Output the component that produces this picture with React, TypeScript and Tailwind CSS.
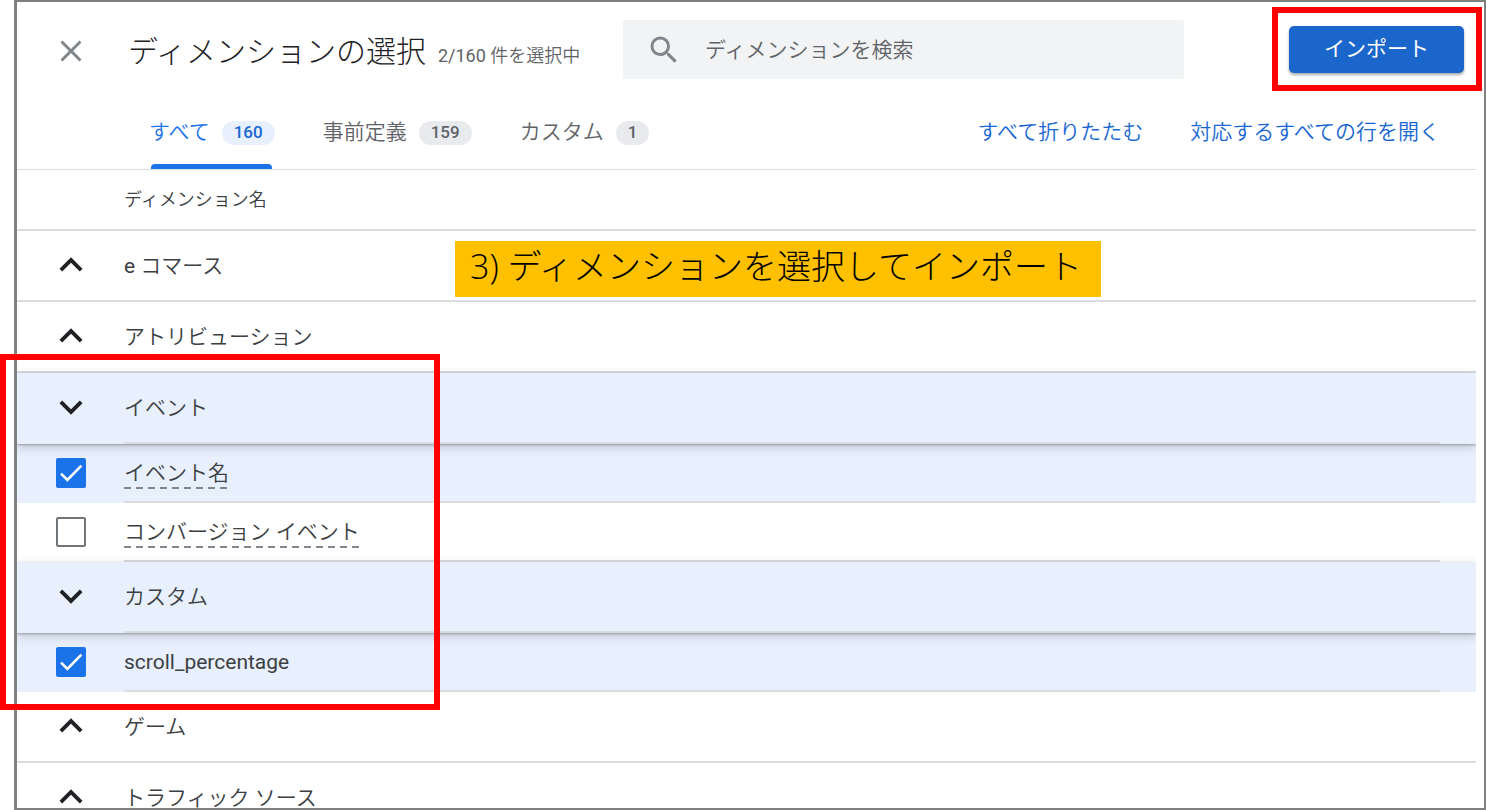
import React, { useState } from "react";
import { MdClose, MdExpandLess, MdExpandMore, MdSearch } from "react-icons/md";

type Row =
  | { kind: "group"; name: string; open?: boolean }
  | { kind: "item"; name: string; checked: boolean; hint?: boolean };

const ROWS: Row[] = [
  { kind: "group", name: "e コマース" },
  { kind: "group", name: "アトリビューション" },
  { kind: "group", name: "イベント", open: true },
  { kind: "item", name: "イベント名", checked: true, hint: true },
  { kind: "item", name: "コンバージョン イベント", checked: false, hint: true },
  { kind: "group", name: "カスタム", open: true },
  { kind: "item", name: "scroll_percentage", checked: true },
  { kind: "group", name: "ゲーム" },
  { kind: "group", name: "トラフィック ソース" },
];

const TABS = [
  { name: "すべて", count: 160 },
  { name: "事前定義", count: 159 },
  { name: "カスタム", count: 1 },
];

// Latin runs are set a step heavier than the Japanese text beside them.
function MixedText({ text }: { text: string }) {
  return (
    <>
      {text.split(/([\x21-\x7e]+)/).map((part, i) =>
        i % 2 === 1 ? (
          <span key={i} className="font-normal">
            {part}
          </span>
        ) : (
          part
        ),
      )}
    </>
  );
}

function GroupRow({ name, open = false }: { name: string; open?: boolean }) {
  const Icon = open ? MdExpandMore : MdExpandLess;
  const line = open ? "border-transparent" : "border-[#dadce0]";
  return (
    <tr
      className={
        open
          ? "relative z-10 h-[71px] bg-[#e8f0fe] shadow-[0_1px_2px_rgba(60,64,67,0.35),0_3px_9px_rgba(60,64,67,0.25)]"
          : "h-[71px]"
      }
    >
      <td className={`border-b-2 p-0 pb-[2px] pl-[31px] ${line}`}>
        <button type="button" aria-label={name} aria-expanded={open} className="block text-[#202124]">
          <Icon size={46} />
        </button>
      </td>
      <td className="border-b-2 border-[#dadce0] p-0 pt-[2px]">
        <MixedText text={name} />
      </td>
      <td className={`border-b-2 p-0 ${line}`} />
    </tr>
  );
}

function ItemRow({ name, initial, hint }: { name: string; initial: boolean; hint?: boolean }) {
  const [checked, setChecked] = useState(initial);
  const id = `dimension-${name}`;
  return (
    <tr className={checked ? "h-[59px] bg-[#e8f0fe]" : "h-[59px]"}>
      <td className="border-b-2 border-transparent p-0 pl-[39px]">
        <span className="grid size-[30px]">
          <input
            id={id}
            type="checkbox"
            checked={checked}
            onChange={(e) => setChecked(e.target.checked)}
            className="col-start-1 row-start-1 size-[30px] appearance-none rounded-[2px] border-2 border-[#70757a] checked:border-[#1a73e8] checked:bg-[#1a73e8]"
          />
          {checked && (
            <svg
              viewBox="0 0 30 30"
              className="pointer-events-none col-start-1 row-start-1 size-[30px] fill-none stroke-white"
              strokeWidth="2.6"
            >
              <path d="M5 15.6 L11.4 22 L25.4 7.6" />
            </svg>
          )}
        </span>
      </td>
      <td className="border-b-2 border-[#dadce0] p-0 pt-[2px]">
        <label htmlFor={id} className="inline-block leading-[30px]">
          <MixedText text={name} />
          {hint && (
            <span className="-mt-[1px] block h-[2px] bg-[repeating-linear-gradient(90deg,#80868b_0_7px,transparent_7px_12px)]" />
          )}
        </label>
      </td>
      <td className="border-b-2 border-transparent p-0" />
    </tr>
  );
}

export default function App() {
  const [active, setActive] = useState(0);
  return (
    <div className="relative h-screen overflow-hidden bg-white pl-[14px] font-['Roboto','Noto_Sans_CJK_JP',sans-serif] text-[21px] font-[350] text-[#3c4043]">
      <main className="h-full overflow-hidden border-2 border-l-3 border-[#808080]">
        <header className="flex h-[94px] items-start pt-[18px] pr-[20px] pl-[36px]">
          <button type="button" aria-label="閉じる" className="mt-[13px] text-[#80868b]">
            <MdClose size={36} />
          </button>
          <div className="ml-[39px] flex w-[495px] items-baseline gap-[12px] whitespace-nowrap">
            <h1 className="text-[30px] leading-[64px] font-light text-[#202124]">ディメンションの選択</h1>
            <span className="text-[18px] text-[#5f6368]">
              <MixedText text="2/160 件を選択中" />
            </span>
          </div>
          <label className="flex h-[59px] min-w-0 flex-1 items-center rounded-[2px] bg-[#f1f3f4] pl-[23px] text-[#80868b]">
            <MdSearch size={36} className="shrink-0" />
            <input
              type="search"
              aria-label="ディメンションを検索"
              placeholder="ディメンションを検索"
              className="ml-[23px] h-full min-w-0 flex-1 bg-transparent outline-none placeholder:text-[#5f6368]"
            />
          </label>
          <button
            type="button"
            className="mt-[6px] ml-[105px] h-[47px] w-[175px] rounded-[5px] bg-[#1b66ca] font-normal text-white shadow-[0_2px_3px_rgba(60,64,67,0.45)]"
          >
            インポート
          </button>
        </header>

        <div className="mr-[8px] flex h-[74px] items-stretch border-b border-[#dadce0] pr-[36px] pl-[132px]">
          <nav className="flex gap-[48px]" role="tablist">
            {TABS.map((tab, i) => {
              const on = i === active;
              return (
                <button
                  key={tab.name}
                  type="button"
                  role="tab"
                  aria-selected={on}
                  onClick={() => setActive(i)}
                  className={`flex flex-col whitespace-nowrap ${on ? "text-[#1a73e8]" : "text-[#5f6368]"}`}
                >
                  <span className="flex flex-1 items-center gap-[12px]">
                    {tab.name}
                    <span
                      className={`flex h-[24px] items-center rounded-full px-[12px] text-[17px] font-medium ${
                        on ? "bg-[#e8f0fe] text-[#1967d2]" : "bg-[#e8eaed] text-[#5f6368]"
                      }`}
                    >
                      {tab.count}
                    </span>
                  </span>
                  <span
                    className={`-mt-[5px] h-[5px] w-[121px] max-w-full self-center rounded-t-[4px] ${on ? "bg-[#1a73e8]" : "bg-transparent"}`}
                  />
                </button>
              );
            })}
          </nav>
          <div className="ml-auto flex items-center gap-[47px] whitespace-nowrap text-[#1967d2]">
            <button type="button">すべて折りたたむ</button>
            <button type="button">対応するすべての行を開く</button>
          </div>
        </div>

        <div className="mr-[8px] overflow-hidden">
          <table className="w-full table-fixed border-separate border-spacing-0 text-left">
            <colgroup>
              <col className="w-[107px]" />
              <col />
              <col className="w-[36px]" />
            </colgroup>
            <thead>
              <tr className="h-[61px]">
                <td className="border-b-2 border-[#dadce0] p-0" />
                <th className="border-b-2 border-[#dadce0] p-0 text-[18px] font-[350]">ディメンション名</th>
                <td className="border-b-2 border-[#dadce0] p-0" />
              </tr>
            </thead>
            <tbody>
              {ROWS.map((row) =>
                row.kind === "group" ? (
                  <GroupRow key={row.name} name={row.name} open={row.open} />
                ) : (
                  <ItemRow key={row.name} name={row.name} initial={row.checked} hint={row.hint} />
                ),
              )}
            </tbody>
          </table>
        </div>
      </main>

      <div className="pointer-events-none absolute top-[7px] right-[4px] z-20 h-[84px] w-[210px] border-6 border-[#ff0000]" />
      <div className="pointer-events-none absolute top-[354px] left-0 z-20 h-[356px] w-[440px] border-6 border-[#ff0000]" />
      <p className="absolute top-[241px] left-[455px] z-20 flex h-[56px] w-[646px] items-center bg-[#ffc000] pb-[6px] pl-[15px] font-['Open_Sans','Noto_Sans_CJK_JP',sans-serif] text-[34px] leading-[50px] font-light whitespace-nowrap text-black">
        3) ディメンションを選択してインポート
      </p>
    </div>
  );
}
